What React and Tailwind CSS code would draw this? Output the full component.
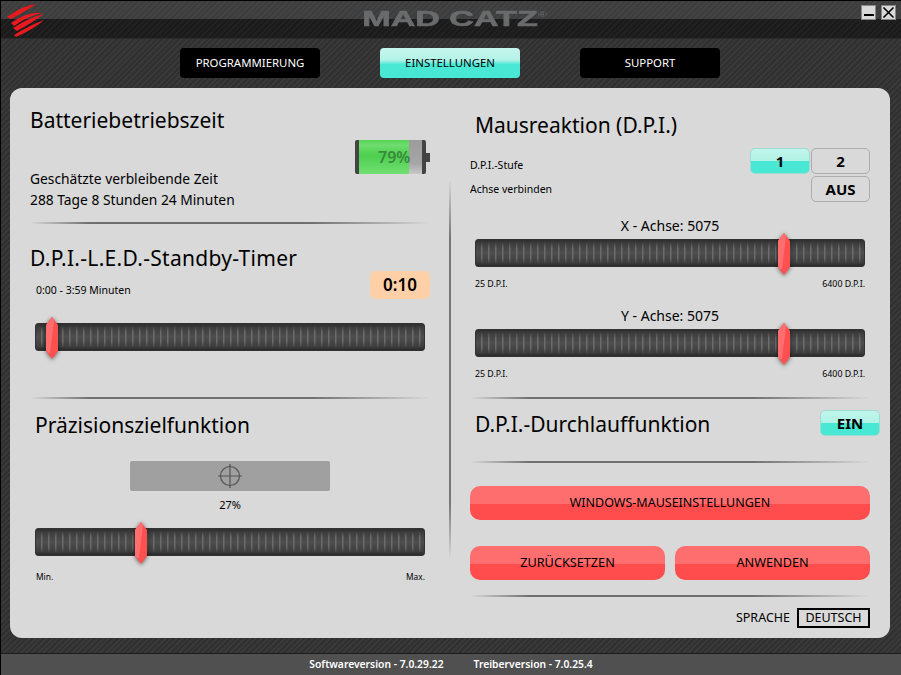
import React from 'react';

const carbon = 'bg-[repeating-linear-gradient(135deg,#303030_0px,#303030_2px,#393939_2px,#393939_4px)]';

const Divider = ({ className = '' }) => (
  <div className={`h-[2px] bg-[linear-gradient(90deg,#d9d9d900,#6e6e6e_15%,#6e6e6e_70%,#d9d9d900)] ${className}`} />
);

const Thumb = ({ left }) => (
  <div className="absolute top-[-7px] h-[42px] w-[12px] drop-shadow-[0_1px_2px_rgba(0,0,0,0.55)]" style={{ left }}>
    <svg width="12" height="42" viewBox="0 0 12 42">
      <polygon points="6,0 12,8 12,34 6,42 0,34 0,8" fill="#ff5050" />
      <polygon points="6,0 8,3 4,36 2,36 0,34 0,8" fill="#ff6e6e" />
    </svg>
  </div>
);

const Slider = ({ left }) => (
  <div className="relative h-[28px] rounded-[3px] bg-[linear-gradient(180deg,#2e2e2e_0%,#3e3e3e_14%,#4e4e4e_50%,#3e3e3e_86%,#2a2a2a_100%)] border border-[#333]">
    <div className="h-full mx-[2px] bg-[repeating-linear-gradient(90deg,transparent_0px,transparent_3px,#6c6c6c_3.5px,#6c6c6c_4px,transparent_5px,transparent_7px)] [mask-image:linear-gradient(180deg,transparent_8%,black_32%,black_68%,transparent_92%)]" />
    <Thumb left={left} />
  </div>
);

const Toggle = ({ children, className = '' }) => (
  <div className={`flex items-center justify-center h-[26px] rounded-[5px] text-[15px] font-bold text-black ${className}`}>{children}</div>
);

const aqua = 'bg-[linear-gradient(180deg,#c0f5eb_0%,#b0f2e5_50%,#48e8d5_50%,#48e8d5_100%)] border border-[#9edcd3]';
const red = 'bg-[linear-gradient(180deg,#ff6e6e_0%,#ff6e6e_52%,#ff4d4d_52%,#ff4d4d_100%)]';

const Tab = ({ active, children }) => (
  <div className={`flex items-center justify-center w-[140px] h-[30px] rounded-[4px] text-[11.4px] ${active ? 'bg-[linear-gradient(180deg,#c4f6ee_0%,#b4f3e7_40%,#48e8d5_55%,#48e8d5_100%)] text-black' : 'bg-black text-white'}`}>
    {children}
  </div>
);

const Logo = () => (
  <svg width="46" height="38" viewBox="0 0 46 38" className="ml-[5px]">
    <g fill="#e8191f">
      <path d="M1 16 Q18 4 30 3 Q20 10 5 18Z" />
      <path d="M5 22 Q22 10 36 12 Q22 15 8 25Z" />
      <path d="M7 27 Q24 16 38 13 Q26 22 11 30Z" />
      <path d="M8 34 Q24 24 38 19 Q28 28 10 36Z" />
    </g>
  </svg>
);

export default function App() {
  return (
    <div className={`w-[901px] h-[675px] flex flex-col overflow-hidden border-t border-l border-black font-['Noto_Sans','Open_Sans',sans-serif] text-black ${carbon}`}>
      <div className="relative h-[38px] shrink-0 bg-[repeating-linear-gradient(135deg,#0000_0px,#0000_2px,#ffffff08_2px,#ffffff08_4px),linear-gradient(180deg,#3d3d3d_0%,#3d3d3d_50%,#1a1a1a_50%,#1a1a1a_100%)] border-b border-[#2a2a2a]">
        <div className="absolute left-0 top-0"><Logo /></div>
        <div className="flex justify-center pt-[6px] pl-[8px] h-full">
          <span className="inline-block scale-x-[1.55] text-[22px] leading-[24px] font-bold font-['Liberation_Sans',sans-serif] text-[#6a6b6d] [-webkit-text-stroke:0.6px_#6a6b6d]">
            MAD CATZ<sup className="text-[8px] font-normal [-webkit-text-stroke:0px] -top-[9px]">®</sup>
          </span>
        </div>
        <div className="absolute right-[5px] top-[4px] flex gap-[5px]">
          <div className="w-[15px] h-[15px] flex items-end justify-center pb-[3px] bg-[#d9d9d9] border border-[#888]">
            <div className="w-[10px] h-[2px] bg-black" />
          </div>
          <div className="w-[15px] h-[15px] flex items-center justify-center bg-[#d9d9d9] border border-[#888]">
            <svg width="13" height="13" viewBox="0 0 13 13"><path d="M1.5 1.5L11.5 11.5M11.5 1.5L1.5 11.5" stroke="#000" strokeWidth="1.6" /></svg>
          </div>
        </div>
      </div>

      <div className="flex justify-center gap-[60px] pt-[9px] pr-[2px] h-[49px] shrink-0">
        <Tab>PROGRAMMIERUNG</Tab>
        <Tab active>EINSTELLUNGEN</Tab>
        <Tab>SUPPORT</Tab>
      </div>

      <div className="flex ml-[9px] w-[880px] h-[550px] shrink-0 rounded-[12px] bg-[#d9d9d9] pl-[20px]">
        <div className="w-[400px] shrink-0">
          <div className="h-[134px] pt-[18px]">
            <div className="text-[21px] leading-[28px]">Batteriebetriebszeit</div>
            <div className="flex justify-end mt-[6px]">
              <div className="flex items-center">
                <div className="relative flex w-[71px] h-[34px] rounded-[2px] border-x-[4px] border-[#444] bg-[linear-gradient(180deg,#9c9c9c,#a6a6a6_70%,#c8c8c8)]">
                  <div className="relative flex items-center w-[50px] bg-[linear-gradient(180deg,#55d455,#6fdc6f_15%,#4ccf4f_45%,#72de72)] text-[16px] font-semibold text-[#3a8a3c]">
                    <span className="pl-[19px] whitespace-nowrap">79%</span>
                  </div>
                </div>
                <div className="w-[4px] h-[9px] bg-[#444]" />
              </div>
            </div>
            <div className="text-[13.8px] leading-[20px] -mt-[5px]">Geschätzte verbleibende Zeit</div>
            <div className="text-[13.8px] leading-[20px] pt-[1px]">288 Tage 8 Stunden 24 Minuten</div>
          </div>
          <Divider />
          <div className="h-[173px]">
            <div className="text-[21px] leading-[28px] tracking-[0.3px] pt-[20px] h-[47px] box-content">D.P.I.-L.E.D.-Standby-Timer</div>
            <div className="flex justify-between items-start -mt-[20px]">
              <div className="text-[10.5px] leading-[14px] pl-[6px] pt-[12px]">0:00 - 3:59 Minuten</div>
              <div className="flex items-center justify-center w-[60px] h-[28px] rounded-[6px] bg-[#ffcfa8] text-[17px] font-semibold">0:10</div>
            </div>
            <div className="px-[5px] mt-[24px]">
              <Slider left={10} />
            </div>
          </div>
          <Divider />
          <div className="pl-[5px] pt-[12px]">
            <div className="text-[21px] leading-[28px]">Präzisionszielfunktion</div>
            <div className="flex justify-center mt-[22px] pr-[5px]">
              <div className="flex items-center justify-center w-[200px] h-[30px] rounded-[2px] bg-[#a0a0a0]">
                <svg width="24" height="24" viewBox="0 0 24 24" fill="none" stroke="#555" strokeWidth="1.2">
                  <circle cx="12" cy="12" r="9.5" />
                  <path d="M0 12H24M12 0V24" />
                </svg>
              </div>
            </div>
            <div className="text-[11px] leading-[14px] text-center mt-[7px] pr-[5px]">27%</div>
            <div className="mt-[16px] w-[390px]">
              <Slider left={99} />
            </div>
            <div className="flex justify-between w-[390px] pl-[1px] text-[8.4px] leading-[12px] mt-[15px]">
              <span>Min.</span>
              <span>Max.</span>
            </div>
          </div>
        </div>

        <div className="ml-[19px] mr-[19px] mt-[92px] w-[2px] h-[380px] shrink-0 bg-[linear-gradient(180deg,#d9d9d900,#777_15%,#777_85%,#d9d9d900)]" />

        <div className="w-[400px] shrink-0">
          <div className="text-[21px] leading-[28px] pt-[23px] pl-[5px] box-content">Mausreaktion (D.P.I.)</div>
          <div className="flex justify-between items-center mt-[9px]">
            <div className="text-[10.5px] pt-[10px]">D.P.I.-Stufe</div>
            <div className="flex gap-[1px]">
              <Toggle className={`w-[60px] ${aqua}`}>1</Toggle>
              <Toggle className="w-[59px] border border-[#adadad]">2</Toggle>
            </div>
          </div>
          <div className="flex justify-between items-center mt-[2px]">
            <div className="text-[10.5px] pt-[2px]">Achse verbinden</div>
            <Toggle className="w-[59px] h-[25px] border border-[#adadad] text-[14px]">AUS</Toggle>
          </div>

          <div className="px-[5px] mt-[14px]">
            <div className="text-[14px] leading-[20px] text-center">X - Achse: 5075</div>
            <div className="mt-[3px]"><Slider left={302} /></div>
            <div className="flex justify-between text-[8.8px] leading-[12px] mt-[11px]">
              <span>25 D.P.I.</span>
              <span>6400 D.P.I.</span>
            </div>
            <div className="text-[14px] leading-[20px] text-center mt-[16px]">Y - Achse: 5075</div>
            <div className="mt-[3px]"><Slider left={302} /></div>
            <div className="flex justify-between text-[8.8px] leading-[12px] mt-[11px]">
              <span>25 D.P.I.</span>
              <span>6400 D.P.I.</span>
            </div>
          </div>

          <Divider className="mt-[17px]" />
          <div className="flex justify-between items-center h-[48px] mb-[14px]">
            <div className="text-[21px] leading-[28px] pl-[5px] pt-[2px]">D.P.I.-Durchlauffunktion</div>
            <Toggle className={`w-[60px] -mr-[10px] text-[13px] ${aqua}`}>EIN</Toggle>
          </div>
          <Divider />

          <div className={`flex items-center justify-center h-[34px] mt-[23px] rounded-[10px] text-[12.5px] ${red}`}>WINDOWS-MAUSEINSTELLUNGEN</div>
          <div className="flex gap-[10px] mt-[26px]">
            <div className={`flex items-center justify-center w-[195px] h-[34px] rounded-[10px] text-[12.7px] ${red}`}>ZURÜCKSETZEN</div>
            <div className={`flex items-center justify-center w-[195px] h-[34px] rounded-[10px] text-[12.7px] ${red}`}>ANWENDEN</div>
          </div>
          <Divider className="mt-[15px]" />
          <div className="flex justify-end items-center gap-[7px] mt-[11px] text-[12.5px]">
            <span>SPRACHE</span>
            <div className="flex items-center justify-center w-[73px] h-[20px] border-2 border-black">DEUTSCH</div>
          </div>
        </div>
      </div>

      <div className="flex justify-center items-center gap-[30px] mt-[15px] flex-1 bg-[#505050] border-t border-[#1c1c1c] text-[10.3px] font-semibold text-white">
        <span>Softwareversion - 7.0.29.22</span>
        <span>Treiberversion - 7.0.25.4</span>
      </div>
    </div>
  );
}
